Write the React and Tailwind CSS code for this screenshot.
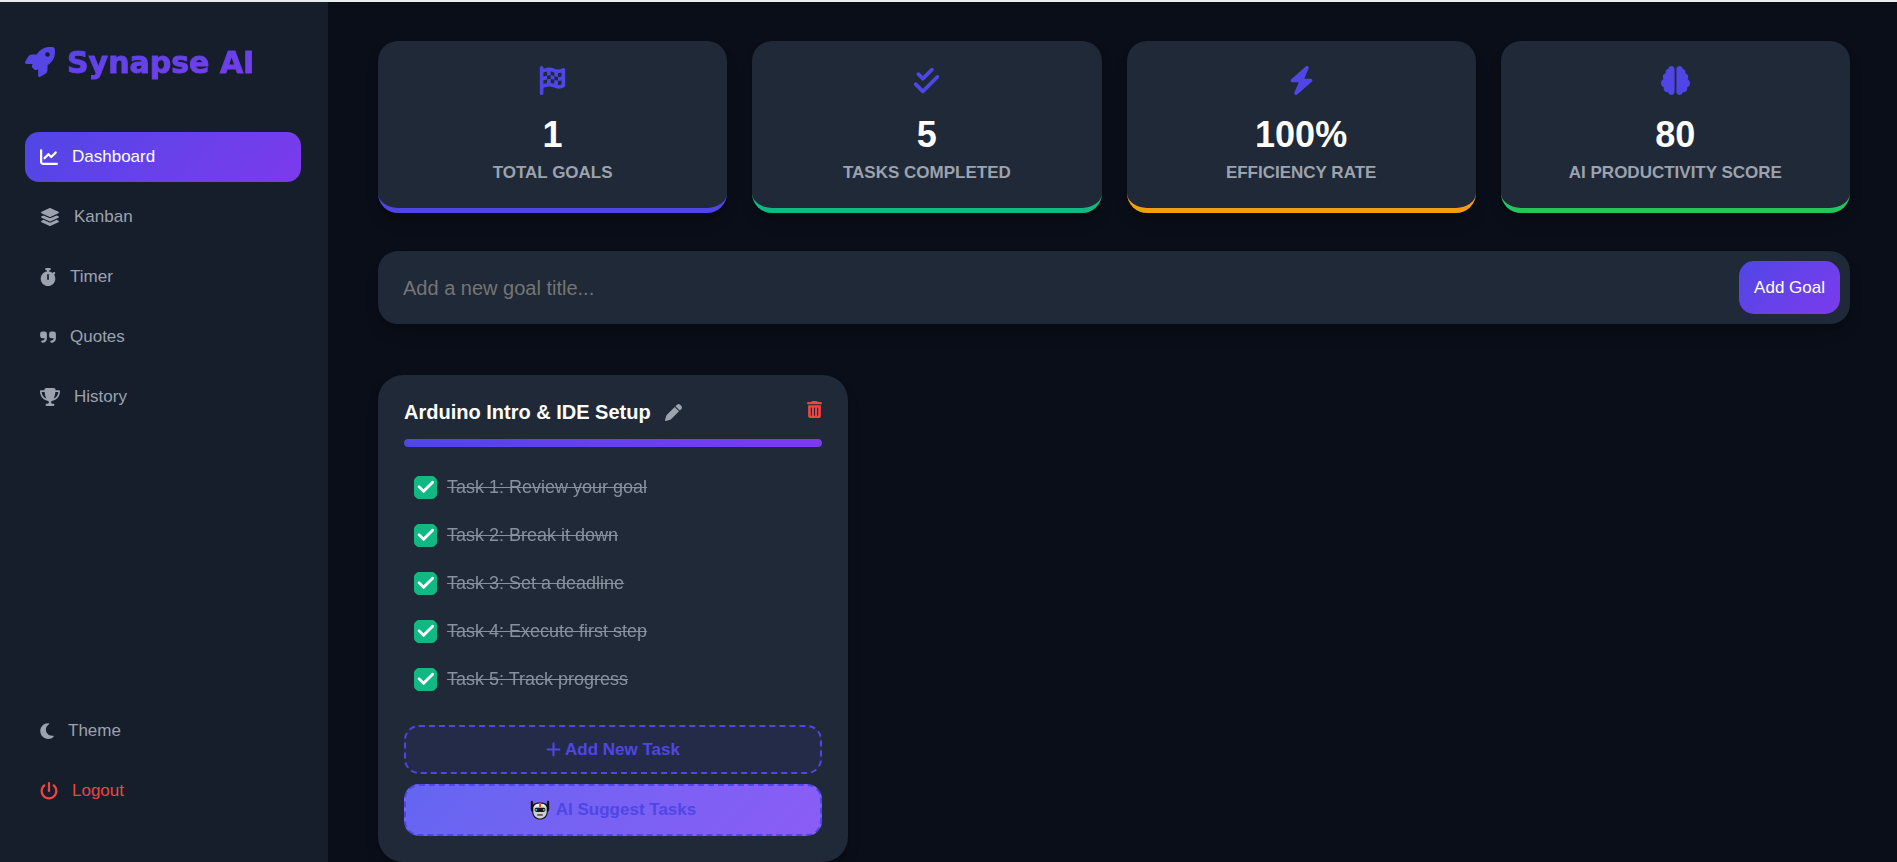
import { useState } from "react"
import {
  FaRocket, FaChartLine, FaLayerGroup, FaStopwatch, FaQuoteRight, FaTrophy, FaMoon, FaPowerOff,
  FaFlagCheckered, FaCheckDouble, FaBolt, FaBrain, FaPen, FaTrashCan, FaPlus,
} from "react-icons/fa6"

// icon glyphs differ in width, so each entry carries its own
const NAV = [
  { id: "dashboard", label: "Dashboard", icon: FaChartLine,  width: "w-[18px]" },
  { id: "kanban",    label: "Kanban",    icon: FaLayerGroup, width: "w-5" },
  { id: "timer",     label: "Timer",     icon: FaStopwatch,  width: "w-4" },
  { id: "quotes",    label: "Quotes",    icon: FaQuoteRight, width: "w-4" },
  { id: "history",   label: "History",   icon: FaTrophy,     width: "w-5" },
]

const TASKS = [
  "Task 1: Review your goal",
  "Task 2: Break it down",
  "Task 3: Set a deadline",
  "Task 4: Execute first step",
  "Task 5: Track progress",
]

const NAV_ITEM = "flex h-[50px] w-full items-center gap-[14px] rounded-[14px] px-[15px] text-[17px]"

function RobotFace() {
  return (
    <svg viewBox="0 0 20 20" className="h-5 w-5" aria-hidden="true">
      <path d="M.8 1.600c0-1.200 2.200-1.200 2.200 0V4.500C5 2.900 7.300 2.400 10 2.400s5 .5 7 2.100V1.600c0-1.200 2.200-1.200 2.200 0V8.500c0 1.700-.5 2.800-1.400 3.500C17.600 17 14 19.600 10 19.600S2.400 17 2.200 12C1.300 11.300.8 10.200.8 8.500z" fill="#111"/>
      <path d="M3.300 7.500C4.300 4.600 7 3.600 10 3.600s5.700 1 6.700 3.900v4.400c-.3 4.200-3.300 6.500-6.700 6.500s-6.400-2.300-6.700-6.500z" fill="#cfcfcf"/>
      <path d="M4.300 6.500C5.500 4.400 7.500 3.700 10 3.700s4.500.7 5.700 2.800z" fill="#f5f5f5"/>
      <path d="M9 3.600h2v3.400H9z" fill="#e8512d"/>
      <rect x="4.600" y="7.700" width="10.800" height="4.200" rx="1.800" fill="#161616"/>
      <path d="M5.400 8.900h1.600v1.800H5.400zM13 8.900h1.600v1.800H13z" fill="#3cc8d8"/>
      <path d="M7.200 14.300h5.600v1.300H7.200z" fill="#333"/>
    </svg>
  )
}

function StatCard({ icon: Icon, value, label, border }) {
  return (
    <div className={`flex flex-col items-center rounded-[20px] border-b-[5px] bg-[#1f2937] py-[25px] shadow-lg shadow-black/20 ${border}`}>
      <Icon className="size-[29px] text-[#4f46e5]"/>
      <p className="mt-[19px] text-[36px] leading-[42px] font-bold text-white">{value}</p>
      <p className="mt-[7px] text-[17px] leading-5 font-bold text-[#9ca3af] uppercase">{label}</p>
    </div>
  )
}

function Sidebar({ page, onSelect }) {
  return (
    <aside className="flex w-[328px] shrink-0 flex-col bg-[#161e2c] pt-10 pr-[27px] pb-[46px] pl-[25px]">
      <div className="flex h-10 items-center gap-3 bg-linear-to-br from-[#4f46e5] to-[#7c3aed] bg-clip-text text-transparent">
        <FaRocket className="size-[30px] text-[#5646e6]"/>
        <span className="font-['DejaVu_Sans',sans-serif] text-[30px] font-black whitespace-nowrap [-webkit-text-stroke:1px_transparent]">Synapse AI</span>
      </div>
      <nav className="mt-[50px] flex flex-col gap-2.5">
        {NAV.map(({ id, label, icon: Icon, width }) => (
          <button key={id} onClick={() => onSelect(id)}
            className={`${NAV_ITEM} ${page === id ? "bg-linear-135 from-[#4f46e5] to-[#7c3aed] text-white" : "text-[#9ca3af]"}`}>
            <Icon className={`h-[18px] ${width}`}/>
            {label}
          </button>
        ))}
      </nav>
      <div className="mt-auto flex flex-col gap-2.5">
        <button className={`${NAV_ITEM} text-[#9ca3af]`}>
          <FaMoon className="h-[18px] w-[14px]"/>
          Theme
        </button>
        <button className={`${NAV_ITEM} text-[#ef4444]`}>
          <FaPowerOff className="h-[18px] w-[18px]"/>
          Logout
        </button>
      </div>
    </aside>
  )
}

function TaskRow({ task, done, onToggle }) {
  return (
    <li className="flex h-12 items-center">
      <label className="flex items-center gap-2.5 text-[18px]">
        <span className="grid">
          <input type="checkbox" checked={done} onChange={onToggle}
            className="col-start-1 row-start-1 size-[23px] appearance-none rounded-[5px] border border-[#9ca3af] checked:border-[#10b981] checked:bg-[#10b981]"/>
          {done && (
            <svg viewBox="0 0 23 23" className="pointer-events-none col-start-1 row-start-1 size-[23px]" aria-hidden="true">
              <path d="M5 10.800l4.600 4.500L18.600 6.300" fill="none" stroke="#fff" strokeWidth="2.800" strokeLinecap="round"/>
            </svg>
          )}
        </span>
        <span className={done ? "text-[#9ca3af] line-through opacity-85" : "text-white"}>{task}</span>
      </label>
    </li>
  )
}

function GoalCard({ title, tasks }) {
  const [done, setDone] = useState(tasks.map(() => true))
  const percent = Math.round((done.filter(Boolean).length / tasks.length) * 100)

  const toggle = i => setDone(done.map((d, n) => (n === i ? !d : d)))

  return (
    <section className="rounded-[25px] bg-[#1f2937] p-[26px] shadow-lg shadow-black/20">
      <div className="flex items-start justify-between">
        <div className="flex h-[22px] items-center gap-[14px]">
          <h2 className="text-[20px] font-bold text-white">{title}</h2>
          <button aria-label="Edit goal" className="text-[#9ca3af]"><FaPen className="size-[17px]"/></button>
        </div>
        <button aria-label="Delete goal" className="text-[#ef4444]"><FaTrashCan className="h-[17px] w-[15px]"/></button>
      </div>

      <div className="mt-4 h-2 overflow-hidden rounded-full bg-[#374151]">
        <div className="h-full rounded-full bg-linear-to-r from-[#4f46e5] to-[#7c3aed]" style={{ width: `${percent}%` }}/>
      </div>

      <ul className="mt-4 px-2.5">
        {tasks.map((task, i) => <TaskRow key={task} task={task} done={done[i]} onToggle={() => toggle(i)}/>)}
      </ul>

      <div className="mt-[22px] flex flex-col gap-2.5 text-[17px] font-bold text-[#4f46e5]">
        <button className="flex h-[49px] items-center justify-center gap-1 rounded-[15px] border-2 border-dashed border-[#4f46e5] bg-[#4f46e5]/10">
          <FaPlus className="h-[17px] w-[15px]"/>
          Add New Task
        </button>
        <button className="flex h-[52px] items-center justify-center gap-1.5 rounded-[15px] border-2 border-dashed border-[#4f46e5] bg-linear-135 from-[#6366f1] to-[#8b5cf6]">
          <RobotFace/>
          AI Suggest Tasks
        </button>
      </div>
    </section>
  )
}

export default function App() {
  const [page, setPage] = useState("dashboard")
  const [goal, setGoal] = useState("")

  return (
    <div className="flex min-h-screen border-t-2 border-[#e8ecef] bg-[#0a0e18] font-['Liberation_Sans',Arial,sans-serif]">
      <Sidebar page={page} onSelect={setPage}/>

      <main className="min-w-0 flex-1 pt-[39px] pr-[47px] pl-[50px]">
        <div className="grid grid-cols-4 gap-[25px]">
          <StatCard icon={FaFlagCheckered} value="1" label="Total Goals" border="border-[#4f46e5]"/>
          <StatCard icon={FaCheckDouble} value="5" label="Tasks Completed" border="border-[#10b981]"/>
          <StatCard icon={FaBolt} value="100%" label="Efficiency Rate" border="border-[#f59e0b]"/>
          <StatCard icon={FaBrain} value="80" label="AI Productivity Score" border="border-[#22c55e]"/>
        </div>

        <form onSubmit={e => e.preventDefault()}
          className="mt-[38px] flex items-center rounded-[20px] bg-[#1f2937] p-2.5 shadow-lg shadow-black/20">
          <input value={goal} onChange={e => setGoal(e.target.value)} aria-label="Goal title" placeholder="Add a new goal title..."
            className="min-w-0 flex-1 bg-transparent px-[15px] text-[20px] text-white outline-none placeholder:text-[#757575]"/>
          <button className="h-[53px] rounded-[15px] bg-linear-135 from-[#4f46e5] to-[#7c3aed] px-[15px] text-[17px] text-white">
            Add Goal
          </button>
        </form>

        <div className="mt-[51px] grid grid-cols-3 gap-[31px]">
          <GoalCard title="Arduino Intro & IDE Setup" tasks={TASKS}/>
        </div>
      </main>
    </div>
  )
}
